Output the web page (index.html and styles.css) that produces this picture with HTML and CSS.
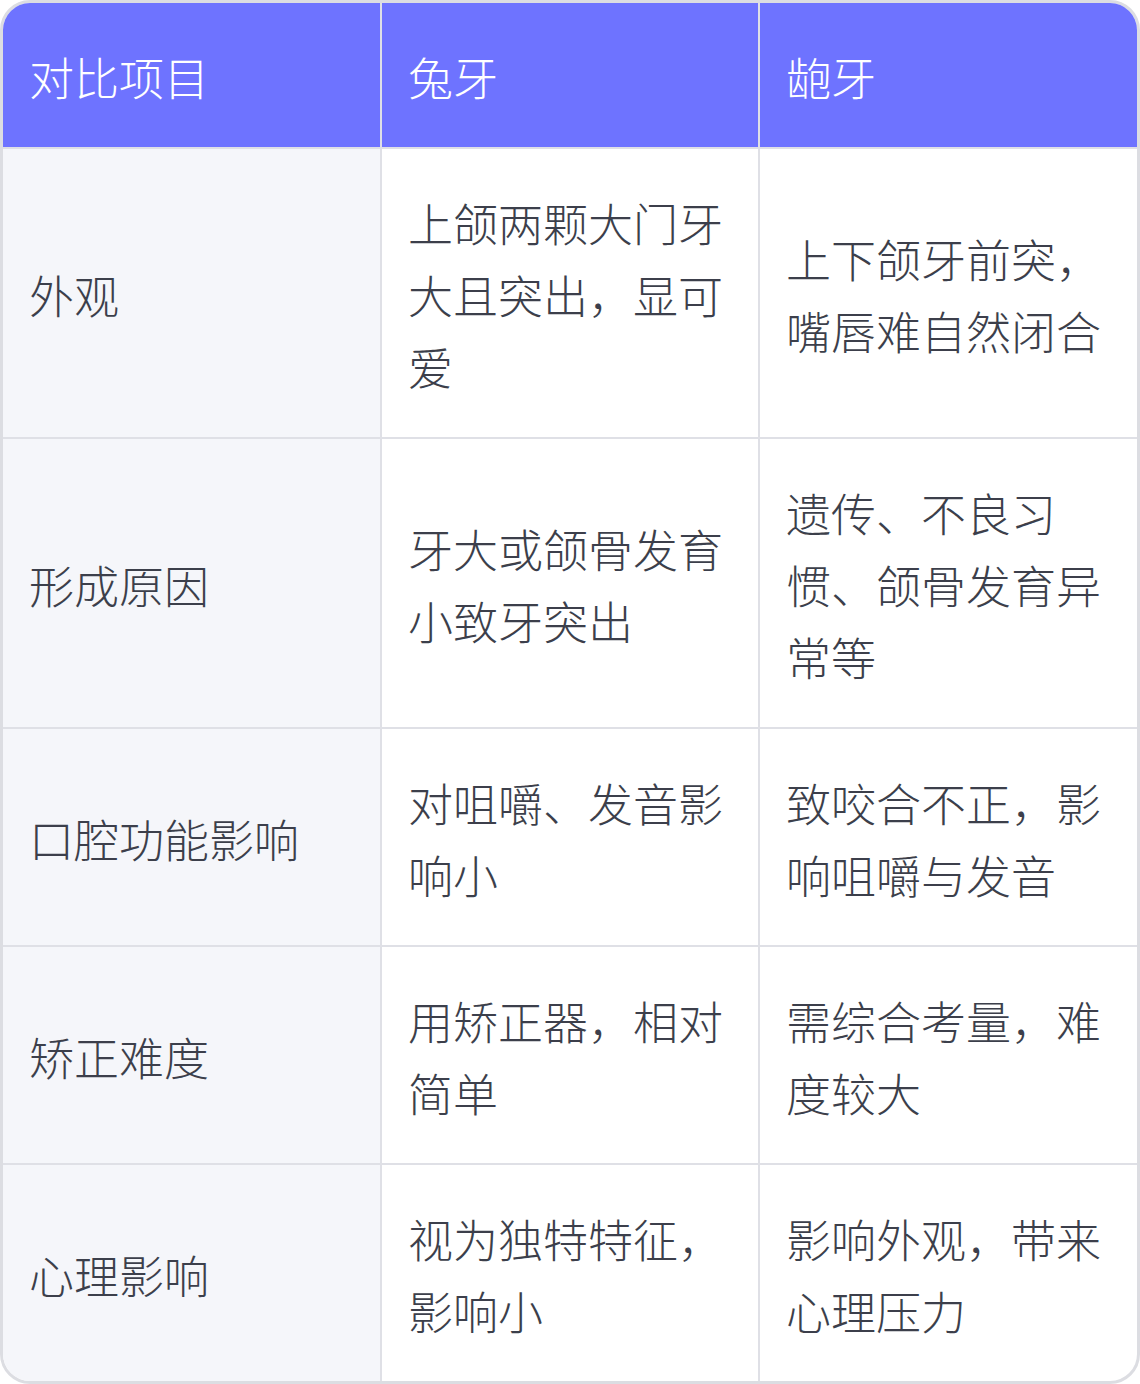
FILE: index.html
```html
<!DOCTYPE html>
<html lang="zh-CN">
<head>
<meta charset="utf-8">
<title>兔牙与龅牙对比</title>
<link rel="stylesheet" href="styles.css">
</head>
<body>
<div class="wrap">
<table class="cmp">
<colgroup><col class="c1"><col class="c2"><col class="c3"></colgroup>
<thead>
<tr><th>对比项目</th><th>兔牙</th><th>龅牙</th></tr>
</thead>
<tbody>
<tr><td>外观</td><td>上颌两颗大门牙大且突出，显可爱</td><td>上下颌牙前突，嘴唇难自然闭合</td></tr>
<tr><td>形成原因</td><td>牙大或颌骨发育小致牙突出</td><td>遗传、不良习惯、颌骨发育异常等</td></tr>
<tr><td>口腔功能影响</td><td>对咀嚼、发音影响小</td><td>致咬合不正，影响咀嚼与发音</td></tr>
<tr><td>矫正难度</td><td>用矫正器，相对简单</td><td>需综合考量，难度较大</td></tr>
<tr><td>心理影响</td><td>视为独特特征，影响小</td><td>影响外观，带来心理压力</td></tr>
</tbody>
</table>
</div>
</body>
</html>
```
FILE: styles.css
```css
html, body { margin: 0; padding: 0; background: #ffffff; }
.wrap {
  width: 1140px;
  height: 1384px;
  box-sizing: border-box;
  border: 3px solid #dcdde2;
  border-radius: 30px;
  overflow: hidden;
  background: #ffffff;
}
.cmp {
  width: 1134px;
  border-collapse: collapse;
  table-layout: fixed;
  font-family: "Noto Sans CJK SC", "Noto Sans", sans-serif;
  font-size: 45px;
  line-height: 72px;
  font-weight: 300;
  color: #3c3f4b;
}
.c1 { width: 378px; }
.c2 { width: 378px; }
.c3 { width: 378px; }
.cmp th, .cmp td {
  padding: 38px 26px 34px;
  text-align: left;
  vertical-align: middle;
  border: 2px solid #dfe0e6;
  word-break: break-all;
}
.cmp tr > :first-child { border-left: none; }
.cmp tr > :last-child { border-right: none; }
.cmp thead th { border-top: none; }
.cmp tbody tr:last-child td { border-bottom: none; }
.cmp th {
  background: #6e73ff;
  color: #ffffff;
  font-weight: 300;
  border-color: #dfe0e6;
}
.cmp td:first-child { background: #f5f6fa; }
```
